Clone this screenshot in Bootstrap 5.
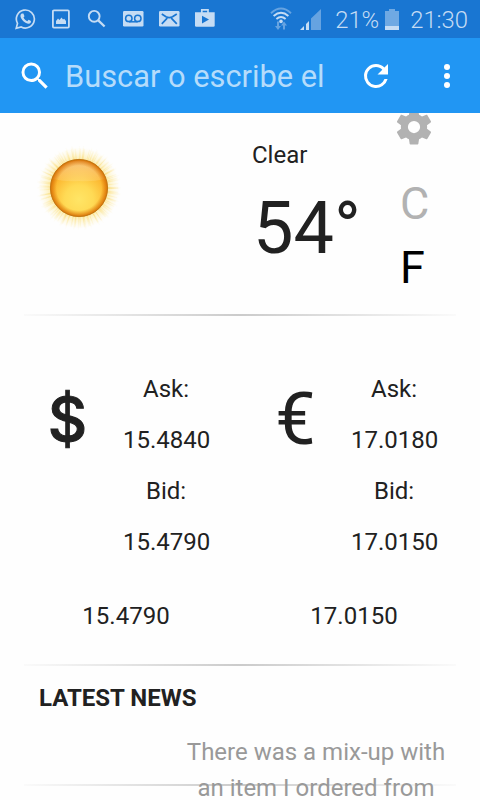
<!DOCTYPE html>
<html lang="es">
<head>
<meta charset="utf-8">
<meta name="viewport" content="width=device-width, initial-scale=1">
<title>Inicio</title>
<link href="https://cdn.jsdelivr.net/npm/bootstrap@5.3.0/dist/css/bootstrap.min.css" rel="stylesheet">
<style>
body{font-family:Roboto,"Liberation Sans",sans-serif;font-size:24px;line-height:36px;color:#212121;background:#fefefe;height:800px}
.screen{width:480px;height:800px}
.status{height:38px;background:#1976d2;color:#c5dcf4;font-weight:300;line-height:38px}
.status svg,.toolbar svg{display:block;flex:none}
.sys-icons{padding-left:15px;gap:15px}
.lens{margin:0 2px 0 1px}
.wifi{margin-right:8px}
.signal{margin-right:14px}
.battery{margin:0 11px 0 6px}
.pct,.clock{font-size:23.8px;padding-top:2px}
.clock{margin-right:8px}
.toolbar{height:75px;background:#2196f3;padding:0 15px 0 17px!important}
.search-hint{font-size:30.8px;color:#b5dcfb;width:293px;margin-left:12px;line-height:40px;padding-top:2px}
.weather{height:201px;padding:0 24px}
.sun{margin:31px 0 0 11px}
.reading{margin:24px 0 0 129px;width:110px}
.degrees{font-size:72px;line-height:84px;margin-top:14px;margin-left:1px}
.units{width:54px;margin-left:31px;font-size:45px;line-height:64px;color:#b2b2b2}
.units svg{display:block;margin-top:-7px}
.unit-list{margin:24px 0 0 7px}
.fade-rule{height:2px;margin:0 24px;background:linear-gradient(90deg,#fafafa,#cbcbcb 50%,#fafafa)}
.rates{height:348px;padding:48px 12px 0}
.sign{width:111px;font-size:72px;line-height:84px;padding-top:14px}
.sign-dollar{font-family:Inter,Roboto,sans-serif;font-size:61px;font-weight:500;-webkit-text-stroke:1px #212121;padding-top:13px}
.quotes{width:86px;line-height:51px}
.total{margin-top:30px}
.news-title{padding:14px 39px 0}
.news-text{width:272px;margin:18px 0 0 180px;color:#999}
.news-block{z-index:1}
.news-rule{top:784px;left:0;right:0;z-index:0}
</style>
</head>
<body>
<div class="screen position-relative overflow-hidden d-flex flex-column">
  <header class="status d-flex align-items-center flex-shrink-0">
    <div class="sys-icons d-flex align-items-center">
      <svg width="21" height="22" viewBox="0 0 21 22"><path d="M1.2 20.4 2.5 15.4A9 9 0 1 1 6.2 19Z" fill="none" stroke="currentColor" stroke-width="1.7"/><path d="M6.8 5.6 8.4 5.5 9.5 8.2 8.5 9.6C9.4 11.4 10.5 12.4 12.3 13.2L13.6 11.8 16 13 15.7 14.7C14.7 16.2 12.7 16 10.5 14.8 7.8 13.2 6.3 11 5.6 9 5.2 7.5 5.8 6.2 6.8 5.6Z" fill="currentColor"/></svg>
      <svg width="19" height="20" viewBox="0 0 19 20"><rect x="1.9" y="1.4" width="16" height="17.2" rx="1" fill="none" stroke="currentColor" stroke-width="1.8"/><path d="M5 15V12L7 9.5 8.5 11 10.5 8.5 12 10.5 13.2 9.8 15 12V15Z" fill="currentColor"/></svg>
      <svg class="lens" width="20" height="20" viewBox="0 0 20 20"><g fill="none" stroke="currentColor"><circle cx="8.2" cy="7.3" r="5.4" stroke-width="1.9"/><path d="m12 11.2 6.6 6.3" stroke-width="2.3"/></g></svg>
      <svg width="21" height="16" viewBox="0 0 21 16"><rect width="20.5" height="15.5" rx="1.2" fill="currentColor"/><g fill="none" stroke="#1976d2" stroke-width="1.5"><circle cx="5.8" cy="7.4" r="3.2"/><circle cx="14.8" cy="7.4" r="3.2"/><path d="M5.8 10.8H14.8"/></g></svg>
      <svg width="21" height="16" viewBox="0 0 21 16"><rect width="20.5" height="15.5" rx="1.2" fill="currentColor"/><g fill="none" stroke="#1976d2" stroke-width="1.7"><path d="M2.8 3 7 5.8Q10.2 7.6 13.5 5.8L17.8 3M2.8 12.8 8.2 7.2M17.8 12.8 12.3 7.2"/></g></svg>
      <svg width="20" height="19" viewBox="0 0 20 19" class="mb-1"><path d="M6.8 5V1.9H13V5" fill="none" stroke="currentColor" stroke-width="1.7"/><path d="M0 4.3H19.7V17.5Q19.7 18.7 18.4 18.7H1.3Q0 18.7 0 17.5Z" fill="currentColor"/><path d="m7 7.8 7 3.8-7 3.8Z" fill="#1976d2"/></svg>
    </div>
    <div class="d-flex align-items-center ms-auto pe-1">
      <svg class="wifi" width="22" height="24" viewBox="0 0 22 24"><g fill="none" stroke="currentColor" stroke-width="1.9"><path d="M1 6.2Q11-3 21 6.2" opacity=".45"/><path d="M3.6 9Q11 2.6 18.4 9M6.4 12Q11 8 15.6 12"/></g><circle cx="11" cy="14.4" r="1.8" fill="currentColor"/><path d="M7 14.5H9V19H11L8 23 5 19H7ZM13 22.5H15V18.5H17L14 14.5 11 18.5H13Z" fill="currentColor" opacity=".45"/></svg>
      <svg class="signal" width="21" height="21" viewBox="0 0 21 21"><path d="M11 9.5 21 0V21H11Z" fill="currentColor" opacity=".45"/><path d="M0 21 4 17V21ZM6 15 9 12V21H6Z" fill="currentColor"/></svg>
      <span class="pct">21%</span>
      <svg class="battery" width="14" height="21" viewBox="0 0 14 21"><path d="M4 0H10V2H14V17H0V2H4Z" fill="currentColor" opacity=".5"/><path d="M0 17H14V21H0Z" fill="currentColor"/></svg>
      <span class="clock">21:30</span>
    </div>
  </header>
  <nav class="toolbar navbar flex-nowrap justify-content-start flex-shrink-0">
    <svg width="36" height="36" viewBox="0 0 24 24" fill="#fff"><path d="M15.5 14h-.79l-.28-.27A6.47 6.47 0 0 0 16 9.5 6.5 6.5 0 1 0 9.5 16c1.61 0 3.09-.59 4.23-1.57l.27.28v.79l5 4.99L20.49 19l-4.99-5zm-6 0C7.01 14 5 11.99 5 9.5S7.01 5 9.5 5 14 7.01 14 9.5 11.99 14 9.5 14z"/></svg>
    <span class="search-hint text-nowrap">Buscar o escribe el</span>
    <svg width="36" height="36" viewBox="0 0 24 24" fill="#fff"><path d="M17.65 6.35A7.96 7.96 0 0 0 12 4a8 8 0 1 0 7.73 10h-2.08A6 6 0 1 1 12 6c1.66 0 3.14.69 4.22 1.78L13 11h7V4z"/></svg>
    <svg class="ms-auto" width="36" height="36" viewBox="0 0 24 24" fill="#fff"><circle cx="12" cy="6" r="2"/><circle cx="12" cy="12" r="2"/><circle cx="12" cy="18" r="2"/></svg>
  </nav>

  <section class="weather d-flex align-items-start overflow-hidden flex-shrink-0">
    <svg class="sun flex-shrink-0" width="88" height="88" viewBox="0 0 88 88">
      <defs>
        <radialGradient id="disc" cx=".5" cy=".7" r=".72"><stop offset="0" stop-color="#ffe566"/><stop offset=".35" stop-color="#ffda55"/><stop offset=".7" stop-color="#fcb62f"/><stop offset="1" stop-color="#ee9218"/></radialGradient>
        <radialGradient id="rim"><stop offset=".78" stop-color="#e07a08" stop-opacity="0"/><stop offset="1" stop-color="#d87308"/></radialGradient>
        <linearGradient id="gloss" x2="0" y2="1"><stop offset="0" stop-color="#fff" stop-opacity=".42"/><stop offset="1" stop-color="#fff" stop-opacity=".12"/></linearGradient>
        <radialGradient id="halo"><stop offset=".62" stop-color="#fbe07c" stop-opacity=".85"/><stop offset=".8" stop-color="#fdeeb0" stop-opacity=".5"/><stop offset="1" stop-color="#fff6d5" stop-opacity="0"/></radialGradient>
        <radialGradient id="ray" gradientUnits="userSpaceOnUse" cx="44" cy="44" r="43"><stop offset=".66" stop-color="#f8d45c" stop-opacity=".4"/><stop offset="1" stop-color="#fbe390" stop-opacity="0"/></radialGradient>
        <filter id="soft"><feGaussianBlur stdDeviation=".45"/></filter>
      </defs>
      <circle cx="44" cy="44" r="41" fill="url(#halo)"/>
      <g fill="none" stroke="url(#ray)" filter="url(#soft)"><circle cx="44" cy="44" r="35" stroke-width="16" stroke-dasharray="1 3.5 1.8 5 .8 2.6 1.2 6"/><circle cx="44" cy="44" r="33" stroke-width="13" stroke-dasharray=".9 2.2 1.4 3.3"/></g>
      <circle cx="44" cy="44" r="28.6" fill="url(#disc)"/>
      <path d="M18 35A27.5 27.5 0 0 1 70 35Q57 38 44 37 31 38 18 35Z" fill="url(#gloss)"/>
      <circle cx="44" cy="44" r="28.6" fill="url(#rim)" stroke="#bd7514" stroke-width=".9"/>
    </svg>
    <div class="reading flex-shrink-0">
      <div>Clear</div>
      <div class="degrees">54°</div>
    </div>
    <div class="units flex-shrink-0">
      <svg width="42" height="42" viewBox="0 0 24 24" fill="#b2b2b2"><path d="M19.43 12.98c.04-.32.07-.64.07-.98s-.03-.66-.07-.98l2.11-1.65c.19-.15.24-.42.12-.64l-2-3.46c-.12-.22-.39-.3-.61-.22l-2.49 1c-.52-.4-1.08-.73-1.69-.98l-.38-2.65A.488.488 0 0 0 14 2h-4c-.25 0-.46.18-.49.42l-.38 2.65c-.61.25-1.17.59-1.69.98l-2.49-1c-.23-.09-.49 0-.61.22l-2 3.46c-.13.22-.07.49.12.64l2.11 1.65c-.04.32-.07.65-.07.98s.03.66.07.98l-2.11 1.65c-.19.15-.24.42-.12.64l2 3.46c.12.22.39.3.61.22l2.49-1c.52.4 1.08.73 1.69.98l.38 2.65c.03.24.24.42.49.42h4c.25 0 .46-.18.49-.42l.38-2.65c.61-.25 1.17-.59 1.69-.98l2.49 1c.23.09.49 0 .61-.22l2-3.46c.12-.22.07-.49-.12-.64l-2.11-1.65zM12 15.5A3.5 3.5 0 1 1 12 8.5a3.5 3.5 0 0 1 0 7z"/></svg>
      <div class="unit-list"><div>C</div><div class="text-black">F</div></div>
    </div>
  </section>
  <div class="fade-rule flex-shrink-0"></div>

  <section class="rates flex-shrink-0">
    <div class="row g-0">
      <div class="col-6">
        <div class="d-flex"><div class="sign sign-dollar text-center">$</div><div class="quotes text-center"><div>Ask:</div><div>15.4840</div><div>Bid:</div><div>15.4790</div></div></div>
        <div class="text-center total">15.4790</div>
      </div>
      <div class="col-6">
        <div class="d-flex"><div class="sign text-center">€</div><div class="quotes text-center"><div>Ask:</div><div>17.0180</div><div>Bid:</div><div>17.0150</div></div></div>
        <div class="text-center total">17.0150</div>
      </div>
    </div>
  </section>
  <div class="fade-rule flex-shrink-0"></div>

  <section class="news-block position-relative flex-shrink-0">
    <div class="news-title fw-bold">LATEST NEWS</div>
    <p class="news-text text-center mb-0">There was a mix-up with an item I ordered from</p>
  </section>
  <div class="fade-rule news-rule position-absolute"></div>
</div>
<script src="https://cdn.jsdelivr.net/npm/bootstrap@5.3.0/dist/js/bootstrap.bundle.min.js"></script>
</body>
</html>
